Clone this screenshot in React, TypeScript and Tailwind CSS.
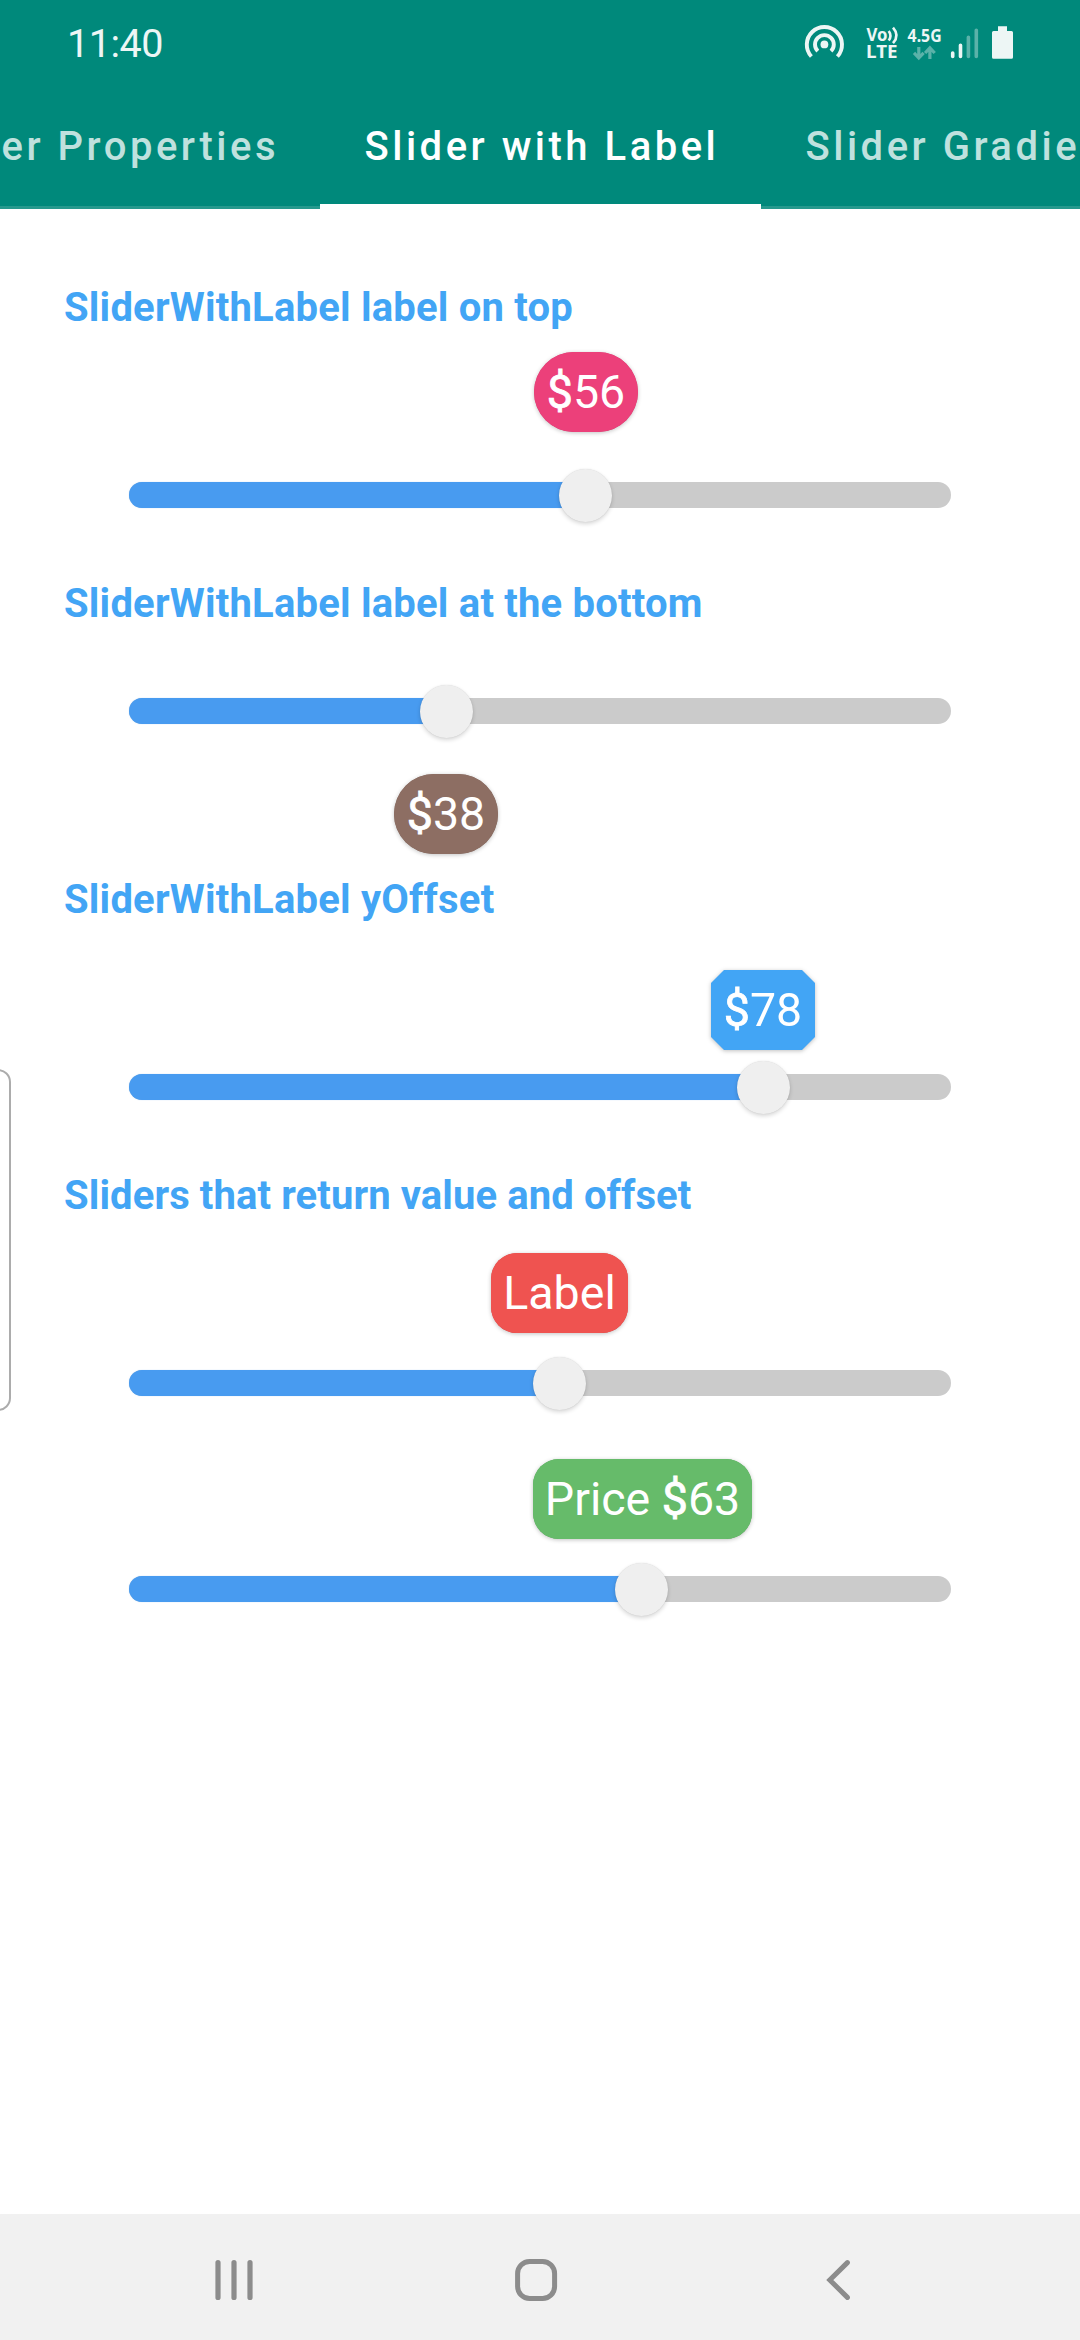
type Variant = {
  position: number;
  label: string;
  labelLeft: number;
  labelClass: string;
  gapClass: string;
};

const TRACK_LEFT = 129;

const chamfer =
  '[clip-path:polygon(13px_0,calc(100%_-_13px)_0,100%_13px,100%_calc(100%_-_13px),calc(100%_-_13px)_100%,13px_100%,0_calc(100%_-_13px),0_13px)]';

function LabelText({ text }: { text: string }) {
  const [before, after] = text.split('$');
  if (after === undefined) return <span>{text}</span>;
  return (
    <span className="whitespace-pre">
      {before}
      <span className="[-webkit-text-stroke:0.8px_white]">$</span>
      {after}
    </span>
  );
}

function Slider({ position, label, labelLeft, labelClass, gapClass, chamfered = false }: Variant & { chamfered?: boolean }) {
  return (
    <div className={`relative ml-[129px] h-[26px] w-[822px] rounded-full bg-[#cbcbcb] ${gapClass}`}>
      <div
        className="h-full rounded-l-full bg-[#489bf0] shadow-[0_0_1px_#489bf080]"
        style={{ width: position - TRACK_LEFT }}
      />
      <div
        className="absolute top-[-13px] size-[53px] rounded-full bg-[#efefef] shadow-[0_2px_4px_rgba(0,0,0,0.16),0_0_1px_rgba(0,0,0,0.15)]"
        style={{ left: position - TRACK_LEFT - 26.5 }}
      />
      <div
        className={`absolute ${labelClass} ${chamfered ? 'drop-shadow-[0_1px_2px_rgba(0,0,0,0.25)]' : ''}`}
        style={{ left: labelLeft - TRACK_LEFT }}
      >
        <div
          className={`flex h-[80px] items-center justify-center whitespace-nowrap text-[46.5px] leading-none text-white ${
            chamfered
              ? `w-[104px] bg-[#42a5f5] ${chamfer}`
              : 'w-full rounded-[inherit] bg-inherit shadow-[0_1px_4px_rgba(0,0,0,0.24)]'
          }`}
        >
          <LabelText text={label} />
        </div>
      </div>
    </div>
  );
}

function Heading({ children, className = '' }: { children: string; className?: string }) {
  return (
    <h2 className={`ml-[64px] h-[46px] whitespace-nowrap text-[40px] leading-[48px] font-bold text-[#42a5f5] ${className}`}>
      {children}
    </h2>
  );
}

function StatusIcons() {
  return (
    <svg width="220" height="48" viewBox="800 20 220 48" fill="none" className="text-[#edf6f5]">
      <circle cx="824.4" cy="44.4" r="3.9" fill="currentColor" />
      <path d="M817.8 51.2 A9.4 9.4 0 1 1 831 51.2" stroke="currentColor" strokeWidth="3.9" />
      <path d="M811.4 56.5 A17.6 17.6 0 1 1 837.4 56.5" stroke="currentColor" strokeWidth="3.9" />
      <g fill="currentColor" fontFamily="Noto Sans" fontWeight="700">
        <text x="866.5" y="40.8" fontSize="17.8" textLength="21" lengthAdjust="spacingAndGlyphs">Vo</text>
        <text x="866" y="58" fontSize="17.8" textLength="31.5" lengthAdjust="spacingAndGlyphs">LTE</text>
        <text x="907.6" y="41.8" fontSize="17.8" textLength="34" lengthAdjust="spacingAndGlyphs">4.5G</text>
      </g>
      <path d="M888.7 31 Q892.2 35.8 888.7 40.6 M893 27.6 Q900 35.4 893 43.2" stroke="currentColor" strokeWidth="2.6" />
      <g stroke="#5bb2a9" strokeWidth="3.2">
        <path d="M918.8 47 V58.5 M914 52.8 L918.8 58 L923.6 52.8" />
        <path d="M929.9 59 V48 M925.1 53 L929.9 47.8 L934.7 53" />
      </g>
      <g strokeWidth="3.6" strokeLinecap="round">
        <path d="M952.7 53 V56.4 M960.5 45.2 V56.4" stroke="currentColor" />
        <path d="M968.4 37.3 V56.4 M976.3 30.2 V56.4" stroke="#5bb2a9" />
      </g>
      <path
        d="M998 26.3 h9 v4.8 h4.5 q1.5 0 1.5 1.5 v24.6 q0 1.5 -1.5 1.5 h-18 q-1.5 0 -1.5 -1.5 v-24.6 q0 -1.5 1.5 -1.5 h4.5 z"
        fill="currentColor"
      />
    </svg>
  );
}

function Header() {
  return (
    <header className="h-[209px] overflow-hidden bg-[#00897b]">
      <div className="flex h-[88px] items-center justify-between pl-[67px] pr-[60px] text-[#edf6f5]">
        <span className="text-[39.5px] leading-[50px] tracking-[-0.5px]">11:40</span>
        <StatusIcons />
      </div>
      <nav className="flex h-[121px] text-[40px] leading-[46px] font-medium tracking-[3.5px] whitespace-nowrap text-[#bfe1de]">
        <div className="flex w-[320px] shrink-0 justify-end border-b-[3px] border-[#26998d] pt-[36px] pr-[41px]">
          <span>Slider Properties</span>
        </div>
        <div className="w-[441px] shrink-0 border-b-[5px] border-white pt-[36px] pl-[44.5px] text-white">
          <span>Slider with Label</span>
        </div>
        <div className="w-[319px] shrink-0 overflow-hidden border-b-[3px] border-[#26998d] pt-[36px] pl-[44.5px]">
          <span>Slider Gradient</span>
        </div>
      </nav>
    </header>
  );
}

function NavigationBar() {
  return (
    <footer className="flex h-[126px] items-center justify-between bg-[#f1f1f1] pt-[6px] pr-[210px] pl-[204px]">
      <svg width="60" height="60" viewBox="204 2250 60 60" stroke="#8c8c8c" strokeWidth="5.2" strokeLinecap="round">
        <path d="M218 2262.6 V2297.4 M234 2262.6 V2297.4 M250 2262.6 V2297.4" />
      </svg>
      <svg width="60" height="60" viewBox="507 2250 60 60" fill="none" stroke="#8c8c8c" strokeWidth="5">
        <rect x="517.6" y="2261.5" width="37" height="37" rx="12" />
      </svg>
      <svg width="60" height="60" viewBox="810 2250 60 60" fill="none" stroke="#8c8c8c" strokeWidth="5" strokeLinecap="round">
        <path d="M847.4 2262.6 L829.8 2280 L847.4 2297.4" />
      </svg>
    </footer>
  );
}

export default function App() {
  return (
    <div className="relative flex h-[2340px] w-[1080px] flex-col overflow-hidden bg-white font-[Roboto,sans-serif]">
      <Header />
      <main className="grow pt-[75px]">
        <Heading className="tracking-[0.2px]">SliderWithLabel label on top</Heading>
        <Slider position={585.5} label="$56" labelLeft={534} labelClass="top-[-130px] w-[104px] rounded-[40px] bg-[#ec407a]" gapClass="mt-[152px]" />
        <Heading className="mt-[72px] tracking-[0.2px]">SliderWithLabel label at the bottom</Heading>
        <Slider position={446.3} label="$38" labelLeft={394} labelClass="top-[76px] w-[104px] rounded-[40px] bg-[#8d6e63]" gapClass="mt-[72px]" />
        <Heading className="mt-[152px] tracking-[0.2px]">SliderWithLabel yOffset</Heading>
        <Slider position={763.5} label="$78" labelLeft={711} labelClass="top-[-104px] w-[104px]" gapClass="mt-[152px]" chamfered />
        <Heading className="mt-[72px] tracking-[0.1px]">Sliders that return value and offset</Heading>
        <Slider position={559.5} label="Label" labelLeft={491} labelClass="top-[-117px] w-[137px] rounded-[26px] bg-[#ef5350]" gapClass="mt-[152px]" />
        <Slider position={641.5} label="Price $63" labelLeft={533} labelClass="top-[-117px] w-[219px] rounded-[26px] bg-[#66bb6a]" gapClass="mt-[180px]" />
      </main>
      <NavigationBar />
      <div className="absolute top-[1069px] left-[-20px] h-[342px] w-[31px] rounded-[13px] border-[2.5px] border-[#acacac]" />
    </div>
  );
}
